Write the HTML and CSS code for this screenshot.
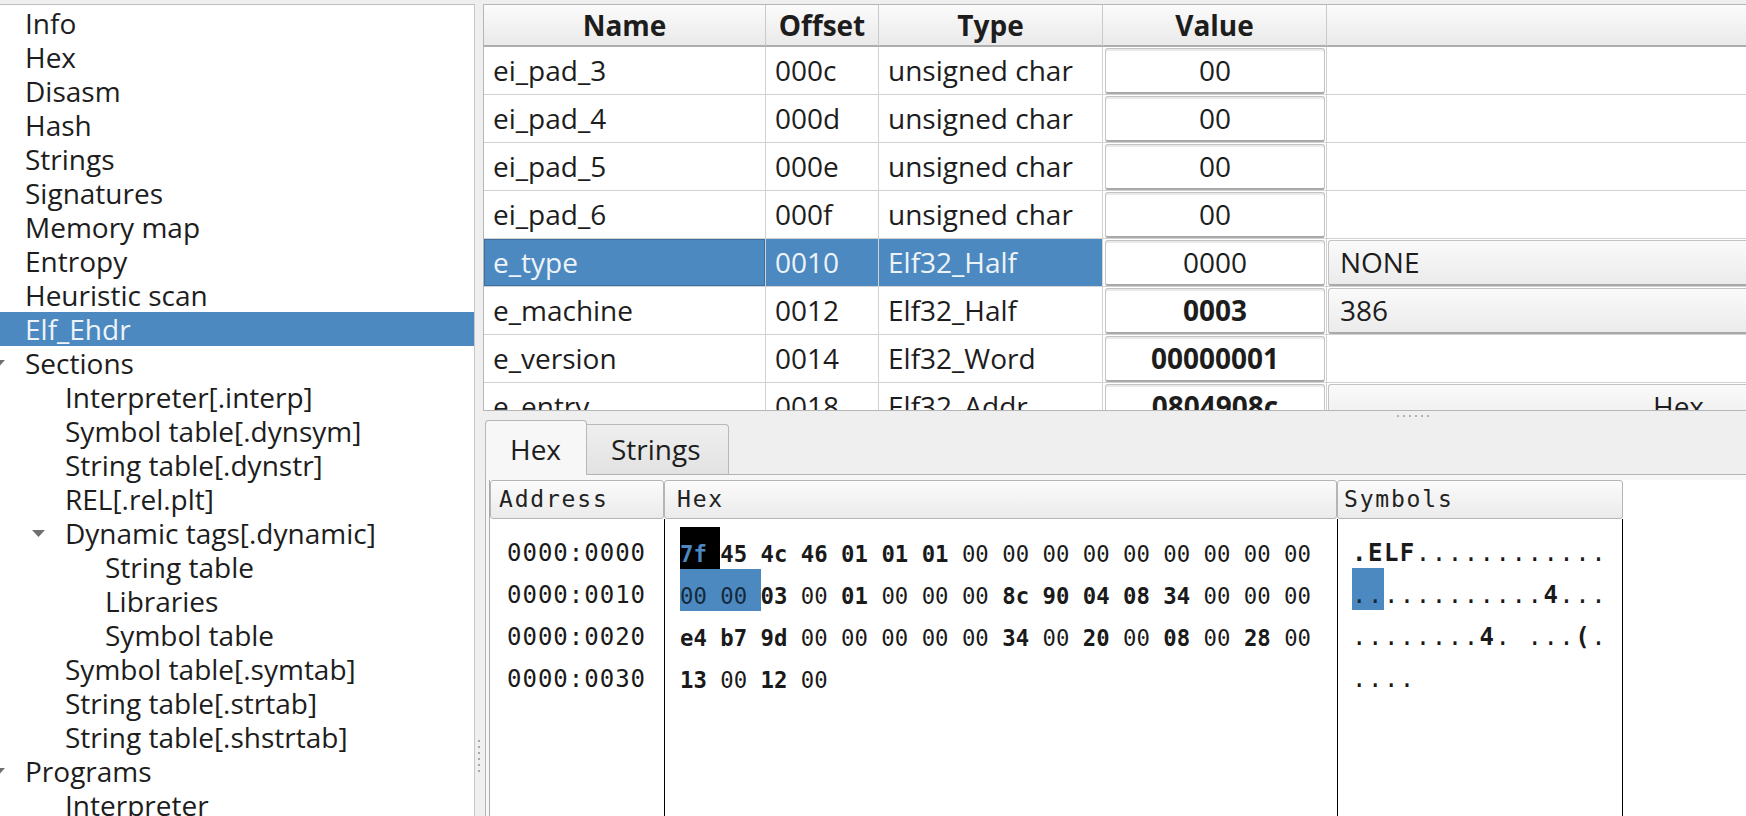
FILE: index.html
```html
<!DOCTYPE html>
<html>
<head>
<meta charset="utf-8">
<title>ELF viewer</title>
<link rel="stylesheet" href="styles.css">
</head>
<body>
<div class="app">
  <div class="tree">
    <div class="node l0">Info</div>
    <div class="node l0">Hex</div>
    <div class="node l0">Disasm</div>
    <div class="node l0">Hash</div>
    <div class="node l0">Strings</div>
    <div class="node l0">Signatures</div>
    <div class="node l0">Memory map</div>
    <div class="node l0">Entropy</div>
    <div class="node l0">Heuristic scan</div>
    <div class="node l0 sel">Elf_Ehdr</div>
    <div class="node l0"><svg class="twisty" viewBox="0 0 13 7"><polygon points="0,0 13,0 6.5,7"/></svg>Sections</div>
    <div class="node l1">Interpreter[.interp]</div>
    <div class="node l1">Symbol table[.dynsym]</div>
    <div class="node l1">String table[.dynstr]</div>
    <div class="node l1">REL[.rel.plt]</div>
    <div class="node l1"><svg class="twisty" viewBox="0 0 13 7"><polygon points="0,0 13,0 6.5,7"/></svg>Dynamic tags[.dynamic]</div>
    <div class="node l2">String table</div>
    <div class="node l2">Libraries</div>
    <div class="node l2">Symbol table</div>
    <div class="node l1">Symbol table[.symtab]</div>
    <div class="node l1">String table[.strtab]</div>
    <div class="node l1">String table[.shstrtab]</div>
    <div class="node l0"><svg class="twisty" viewBox="0 0 13 7"><polygon points="0,0 13,0 6.5,7"/></svg>Programs</div>
    <div class="node l1">Interpreter</div>
  </div>

  <div class="vsplit"><div class="vdots"></div></div>

  <div class="right">
    <div class="tbl">
      <div class="grid">
        <div class="th">Name</div>
        <div class="th">Offset</div>
        <div class="th">Type</div>
        <div class="th">Value</div>
        <div class="th"></div>

        <div class="td">ei_pad_3</div>
        <div class="td">000c</div>
        <div class="td">unsigned char</div>
        <div class="td val"><div class="vbox">00</div></div>
        <div class="td"></div>

        <div class="td">ei_pad_4</div>
        <div class="td">000d</div>
        <div class="td">unsigned char</div>
        <div class="td val"><div class="vbox">00</div></div>
        <div class="td"></div>

        <div class="td">ei_pad_5</div>
        <div class="td">000e</div>
        <div class="td">unsigned char</div>
        <div class="td val"><div class="vbox">00</div></div>
        <div class="td"></div>

        <div class="td">ei_pad_6</div>
        <div class="td">000f</div>
        <div class="td">unsigned char</div>
        <div class="td val"><div class="vbox">00</div></div>
        <div class="td"></div>

        <div class="td sel focus">e_type</div>
        <div class="td sel">0010</div>
        <div class="td sel">Elf32_Half</div>
        <div class="td val"><div class="vbox">0000</div></div>
        <div class="td opt"><div class="combo">NONE</div></div>

        <div class="td">e_machine</div>
        <div class="td">0012</div>
        <div class="td">Elf32_Half</div>
        <div class="td val"><div class="vbox bold">0003</div></div>
        <div class="td opt"><div class="combo">386</div></div>

        <div class="td">e_version</div>
        <div class="td">0014</div>
        <div class="td">Elf32_Word</div>
        <div class="td val"><div class="vbox bold">00000001</div></div>
        <div class="td"></div>

        <div class="td">e_entry</div>
        <div class="td">0018</div>
        <div class="td">Elf32_Addr</div>
        <div class="td val"><div class="vbox bold">0804908c</div></div>
        <div class="td opt"><div class="combo hexbtn">Hex</div></div>
      </div>
    </div>

    <div class="hsplit"><div class="hdots"></div></div>

    <div class="tabs">
      <div class="tabbar">
        <div class="tab active">Hex</div>
        <div class="tab">Strings</div>
      </div>
      <div class="pane">
        <div class="hex">
          <div class="hexhead">
            <div class="hh h-addr">Address</div>
            <div class="hh h-hex">Hex</div>
            <div class="hh h-sym">Symbols</div>
          </div>
          <div class="hexbody">
            <div class="col addr">
              <div class="hr">0000:0000</div>
              <div class="hr">0000:0010</div>
              <div class="hr">0000:0020</div>
              <div class="hr">0000:0030</div>
            </div>
            <div class="col hcol">
              <div class="hr"><span class="hk"><b>7f</b> </span><b>45 4c 46 01 01 01</b> 00 00 00 00 00 00 00 00 00</div>
              <div class="hr"><span class="hb">00 00 </span><b>03</b> 00 <b>01</b> 00 00 00 <b>8c 90 04 08 34</b> 00 00 00</div>
              <div class="hr"><b>e4 b7 9d</b> 00 00 00 00 00 <b>34</b> 00 <b>20</b> 00 <b>08</b> 00 <b>28</b> 00</div>
              <div class="hr"><b>13</b> 00 <b>12</b> 00</div>
            </div>
            <div class="col scol">
              <div class="hr"><b>.ELF</b>............</div>
              <div class="hr"><span class="sb">..</span>..........<b>4</b>...</div>
              <div class="hr">........<b>4</b>. ...<b>(</b>.</div>
              <div class="hr">....</div>
            </div>
          </div>
        </div>
      </div>
    </div>
  </div>
</div>
</body>
</html>
```

FILE: styles.css
```css
* { box-sizing: border-box; }
html, body { margin: 0; padding: 0; }
body {
  width: 1746px;
  height: 816px;
  overflow: hidden;
  background: #efefef;
  font-family: "Open Sans", "Noto Sans", sans-serif;
  font-size: 28px;
  color: #1d1d1d;
}

.app {
  display: flex;
  height: 816px;
  padding-top: 4px;
}

/* ---------- tree ---------- */
.tree {
  flex: none;
  width: 475px;
  background: #fff;
  border-top: 1px solid #bdbdbd;
  border-right: 1px solid #c6c6c6;
  padding-top: 1px;
  overflow: hidden;
}
.node {
  display: flex;
  align-items: center;
  height: 34px;
  line-height: 34px;
  white-space: nowrap;
}
.l0 { padding-left: 25px; }
.l1 { padding-left: 65px; }
.l2 { padding-left: 105px; }
.node.sel { background: #4b89c0; color: #eef3f8; }
.twisty {
  flex: none;
  width: 13px;
  height: 7px;
  margin-left: -33px;
  margin-right: 20px;
  fill: #707070;
}

/* ---------- splitters ---------- */
.vsplit {
  flex: none;
  width: 8px;
  display: flex;
  justify-content: center;
  padding-top: 736px;
}
.vdots {
  width: 2px;
  height: 34px;
  background: repeating-linear-gradient(180deg, #a9a9a9 0 2px, transparent 2px 6px);
}
.hsplit {
  flex: none;
  height: 9px;
  padding: 4px 0 0 914px;
}
.hdots {
  width: 32px;
  height: 2px;
  background: repeating-linear-gradient(90deg, #b0b0b0 0 2px, transparent 2px 6px);
}

/* ---------- right side ---------- */
.right {
  flex: 1;
  min-width: 0;
  display: flex;
  flex-direction: column;
  overflow: hidden;
}

.tbl {
  flex: none;
  height: 407px;
  background: #fff;
  border: 1px solid #b6b6b6;
  border-right: none;
  overflow: hidden;
}
.grid {
  display: grid;
  grid-template-columns: 282px 113px 224px 224px 1000px;
  grid-template-rows: 42px;
  grid-auto-rows: 48px;
}
.th {
  background: linear-gradient(#fbfbfb, #eaeaea);
  border-right: 1px solid #cacaca;
  border-bottom: 2px solid #adadad;
  text-align: center;
  font-weight: bold;
  line-height: 40px;
  white-space: nowrap;
}
.td {
  border-right: 1px solid #d2d2d2;
  border-bottom: 1px solid #d2d2d2;
  padding-left: 9px;
  line-height: 47px;
  white-space: nowrap;
  overflow: hidden;
}
.td.sel { background: #4b89c0; color: #eef3f8; }
.td.focus { box-shadow: inset 0 0 0 1px #3c6f9e; }
.td.val { padding: 1px 1px 0 2px; }
.vbox {
  height: 100%;
  border: 1px solid #c3c3c3;
  border-bottom: 2px solid #a8a8a8;
  border-radius: 3px;
  background: #fff;
  box-shadow: inset 0 2px 0 #e9e9e9;
  text-align: center;
  line-height: 43px;
}
.vbox.bold { font-weight: bold; }
.td.opt { padding: 1px 0 0 1px; }
.combo {
  height: 100%;
  border: 1px solid #c3c3c3;
  border-right: none;
  border-bottom: 2px solid #a8a8a8;
  border-radius: 3px 0 0 3px;
  background: linear-gradient(#fafafa, #ebebeb);
  padding-left: 11px;
  line-height: 43px;
}
.combo.hexbtn { padding-left: 324px; }

/* ---------- tabs ---------- */
.tabs {
  flex: 1;
  min-height: 0;
  display: flex;
  flex-direction: column;
}
.tabbar {
  flex: none;
  height: 55px;
  margin-left: 2px;
  display: flex;
  align-items: flex-end;
  border-bottom: 1px solid #b3b3b3;
}
.tab {
  width: 142px;
  height: 50px;
  padding-left: 24px;
  border: 1px solid #b8b8b8;
  border-left: none;
  border-bottom: none;
  border-radius: 0 4px 0 0;
  background: linear-gradient(#efefef, #e2e2e2);
  line-height: 48px;
  white-space: nowrap;
}
.tab.active {
  width: 102px;
  height: 55px;
  margin-bottom: -1px;
  padding-top: 3px;
  border-left: 1px solid #b8b8b8;
  border-radius: 4px 4px 0 0;
  background: #f7f7f7;
  line-height: 50px;
}
.pane {
  flex: 1;
  min-height: 0;
  margin-left: 2px;
  border-left: 1px solid #b3b3b3;
  background: #f7f7f7;
  padding: 5px 0 0 3px;
  display: flex;
}

/* ---------- hex view ---------- */
.hex {
  flex: 1;
  background: #fff;
  border-left: 1px solid #aaaaaa;
  display: flex;
  flex-direction: column;
}
.hexhead {
  flex: none;
  display: flex;
  height: 39px;
  font-family: "DejaVu Sans Mono", monospace;
  font-size: 23px;
  letter-spacing: 1.8px;
  color: #222;
}
.hh {
  border: 1px solid #b5b5b5;
  border-radius: 3px;
  background: linear-gradient(#fbfbfb, #ebebeb);
  line-height: 37px;
  white-space: pre;
}
.h-addr { width: 174px; padding-left: 8px; }
.h-hex { width: 673px; padding-left: 12px; }
.h-sym { width: 286px; padding-left: 6px; }

.hexbody {
  flex: 1;
  display: flex;
  font-family: "DejaVu Sans Mono", monospace;
  color: #1a1a1a;
}
.col { padding-top: 8px; }
.addr {
  width: 174px;
  padding-left: 17px;
  font-size: 24px;
  letter-spacing: 1px;
}
.hcol {
  width: 673px;
  border-left: 1px solid #000;
  padding-left: 15px;
  font-size: 22.3px;
}
.scol {
  width: 286px;
  border-left: 1px solid #000;
  border-right: 1px solid #000;
  padding-left: 14px;
  font-size: 24px;
  letter-spacing: 1.5px;
}
.hr { height: 42px; white-space: pre; }
.hcol .hr { line-height: 54.6px; }
.addr .hr, .scol .hr { line-height: 53.4px; }

.hk { background: #000; color: #4b89c0; padding: 14.3px 0 1.7px; }
.hb { background: #4b89c0; color: #16293c; padding: 14.3px 0 1.7px; }
.sb { background: #4b89c0; color: #16293c; padding: 12.7px 0 1.3px; }
```
